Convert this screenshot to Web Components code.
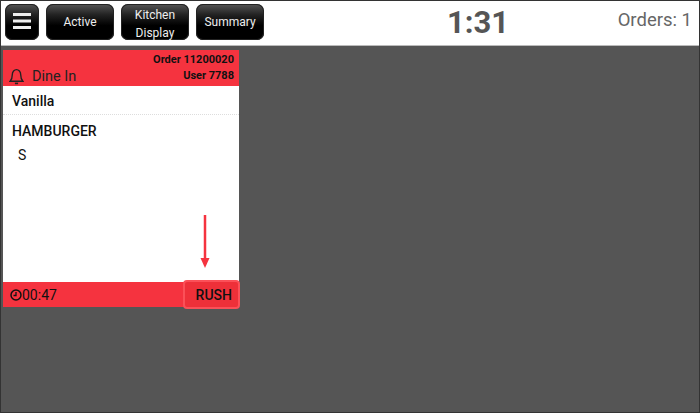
<!DOCTYPE html>
<html>
<head>
<meta charset="utf-8">
<style>
    html, body { margin: 0; padding: 0; background: #555; }
    body { width: 700px; height: 413px; overflow: hidden; }
</style>
</head>
<body>
<kds-screen>
    <kds-topbar slot="top">
        <kds-button square><svg width="18" height="16" viewBox="0 0 18 16" style="position:relative;top:-1px"><path d="M0 1.500h18M0 8h18M0 14.500h18" stroke="#eee" stroke-width="3"/></svg></kds-button>
        <kds-button>Active</kds-button>
        <kds-button><span style="position:relative;top:2px">Kitchen<br>Display</span></kds-button>
        <kds-button>Summary</kds-button>
    </kds-topbar>
    <kds-ticket order="11200020" user="7788" type="Dine In" time="00:47">
        <div class="mod">Vanilla</div>
        <div class="item">HAMBURGER</div>
        <div class="sub">S</div>
    </kds-ticket>
</kds-screen>
<script>
class KdsScreen extends HTMLElement {
    connectedCallback() {
        const shadowRoot = this.attachShadow({ mode: 'open' });
        shadowRoot.innerHTML = `
        <style>
            :host {
                display: flex;
                flex-direction: column;
                box-sizing: border-box;
                width: 700px;
                height: 413px;
                border: 1px solid #333;
                background: #555;
                font-family: Roboto, "Liberation Sans", sans-serif;
            }
            .content {
                flex: 1;
                padding: 4px 2px;
            }
        </style>
        <slot name="top"></slot>
        <div class="content"><slot></slot></div>
        `;
    }
}
customElements.define('kds-screen', KdsScreen);

class KdsTopbar extends HTMLElement {
    connectedCallback() {
        const shadowRoot = this.attachShadow({ mode: 'open' });
        shadowRoot.innerHTML = `
        <style>
            :host {
                display: flex;
                align-items: center;
                position: relative;
                box-sizing: border-box;
                height: 45px;
                padding: 0 7px 2px 4px;
                gap: 7px;
                background: #fff;
                border-bottom: 1px solid #bbb;
            }
            .clock {
                position: absolute;
                left: 446px;
                top: 3px;
                font-size: 31px;
                font-weight: 700;
                color: #555;
            }
            .orders {
                margin-left: auto;
                font-size: 18.500px;
                color: #666;
                margin-top: -4px;
            }
        </style>
        <slot></slot>
        <span class="clock">1:31</span>
        <span class="orders">Orders: 1</span>
        `;
    }
}
customElements.define('kds-topbar', KdsTopbar);

class KdsButton extends HTMLElement {
    connectedCallback() {
        const shadowRoot = this.attachShadow({ mode: 'open' });
        shadowRoot.innerHTML = `
        <style>
            :host {
                display: flex;
                align-items: center;
                justify-content: center;
                box-sizing: border-box;
                width: 68px;
                height: 36px;
                border-radius: 7px;
                background: linear-gradient(#555 0, #222 30%, #000 60%, #000);
                box-shadow: inset 0 0 0 1px #222;
                color: #eee;
                font-size: 12px;
                line-height: 18px;
                text-align: center;
                overflow: hidden;
            }
            :host([square]) { width: 34px; }
        </style>
        <slot></slot>
        `;
    }
}
customElements.define('kds-button', KdsButton);

class KdsTicket extends HTMLElement {
    connectedCallback() {
        const shadowRoot = this.attachShadow({ mode: 'open' });
        shadowRoot.innerHTML = `
        <style>
            :host {
                display: flex;
                flex-direction: column;
                position: relative;
                box-sizing: border-box;
                width: 236px;
                height: 257px;
                background: #fff;
                color: #111;
                font-size: 14px;
            }
            header {
                display: flex;
                justify-content: space-between;
                box-sizing: border-box;
                height: 36px;
                background: #f5333f;
                padding: 2px 5px 0 6px;
            }
            .type {
                display: flex;
                align-items: center;
                gap: 8px;
                align-self: flex-end;
                font-size: 14.500px;
                margin-bottom: 1px;
                color: #222;
            }
            .ids {
                font-size: 11px;
                font-weight: 700;
                line-height: 16px;
                text-align: right;
            }
            .body {
                flex: 1;
                font-weight: 500;
            }
            ::slotted(.mod) {
                padding: 6px 9px 4px;
                height: 18px;
                line-height: 18px;
                border-bottom: 1px dotted #ddd;
            }
            ::slotted(.item) {
                padding: 7px 9px 0;
                line-height: 18px;
            }
            ::slotted(.sub) {
                padding: 6px 15px;
                font-weight: 400;
                line-height: 18px;
            }
            footer {
                display: flex;
                align-items: center;
                box-sizing: border-box;
                height: 25px;
                background: #f5333f;
                padding-left: 7px;
            }
            .time { display: flex; align-items: center; gap: 0; }
            .rush {
                position: absolute;
                right: -1px;
                bottom: -2px;
                display: flex;
                align-items: center;
                justify-content: flex-end;
                box-sizing: border-box;
                width: 57px;
                height: 29px;
                padding-right: 6px;
                border: 2px solid #fb5058;
                border-radius: 4px;
                background: #ee3039;
                font-weight: 500;
            }
            .arrow { position: absolute; left: 196px; top: 165px; }
        </style>
        <header>
            <div class="type">
                <svg width="15" height="17" viewBox="0 0 14 16" fill="none" stroke="#222" stroke-width="1.300"><path d="M1 12.500c1.500-1.500 2-2.500 2-6C3 3.500 5 1.500 7 1.500s4 2 4 5c0 3.500.5 4.500 2 6z"/><path d="M5.500 14.500h3" stroke-width="1.500"/></svg>
                <span>${this.getAttribute('type')}</span>
            </div>
            <div class="ids">Order ${this.getAttribute('order')}<br>User ${this.getAttribute('user')}</div>
        </header>
        <div class="body"><slot></slot></div>
        <footer>
            <span class="time">
                <svg width="12" height="12" viewBox="0 0 12 12" fill="none" stroke="#111" stroke-width="1.500"><circle cx="6" cy="6" r="5"/><path d="M6 3v3.500H3.500" stroke-width="1.300"/></svg>
                ${this.getAttribute('time')}
            </span>
        </footer>
        <div class="rush">RUSH</div>
        <svg class="arrow" width="12" height="53" viewBox="0 0 12 53"><path d="M6 0v46" stroke="#f5333f" stroke-width="2.500"/><path d="M1.500 43h9L6 53z" fill="#f5333f"/></svg>
        `;
    }
}
customElements.define('kds-ticket', KdsTicket);
</script>
</body>
</html>
